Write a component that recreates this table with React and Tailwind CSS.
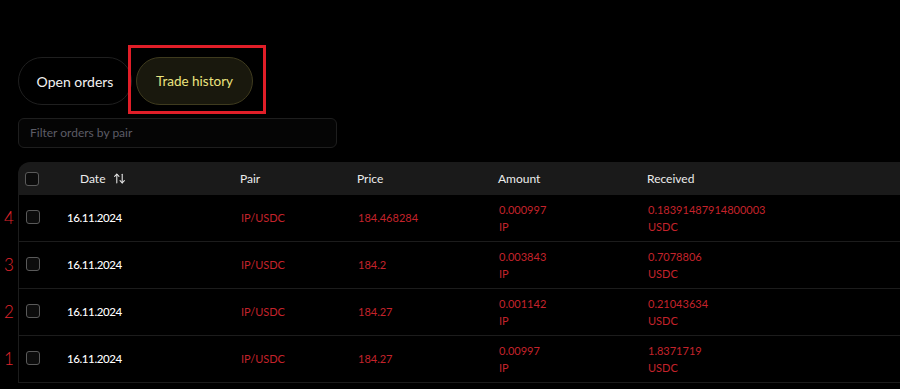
import React from 'react';
import { ArrowUpDown } from 'lucide-react';

const rows = [
  { n: '4', date: '16.11.2024', pair: 'IP/USDC', price: '184.468284', amount: '0.000997', received: '0.18391487914800003' },
  { n: '3', date: '16.11.2024', pair: 'IP/USDC', price: '184.2', amount: '0.003843', received: '0.7078806' },
  { n: '2', date: '16.11.2024', pair: 'IP/USDC', price: '184.27', amount: '0.001142', received: '0.21043634' },
  { n: '1', date: '16.11.2024', pair: 'IP/USDC', price: '184.27', amount: '0.00997', received: '1.8371719' },
];

const cols = 'grid grid-cols-[48px_174px_117px_141px_149px_1fr] items-center';

function Box() {
  return <div className="w-[14px] h-[14px] rounded-[3px] border border-[#5a5a5a] bg-[#0c0c0c]" />;
}

export default function App() {
  return (
    <div className="w-[900px] h-[389px] overflow-hidden bg-black text-white" style={{ fontFamily: 'Lato, "Noto Sans", sans-serif' }}>
      <div className="pt-[57px] pl-[18px]">
        {/* tabs */}
        <div className="flex items-center gap-[4px]">
          <button className="h-[48px] w-[114px] rounded-full border border-[#1f1f1f] text-[14px] text-[#f2f2f2]">
            Open orders
          </button>
          <div className="relative">
            <button className="h-[48px] w-[117px] rounded-full border border-[#3f3b1e] bg-[#19180d] text-[13.5px] text-[#ece47f]">
              Trade history
            </button>
            <div className="absolute left-[-8px] top-[-12px] w-[138px] h-[69px] border-[3px] border-[#e01e28] pointer-events-none" />
          </div>
        </div>

        {/* filter */}
        <div className="mt-[13px] w-[319px] h-[30px] rounded-md border border-[#1e1e1e] bg-[#050505] flex items-center px-[11px]">
          <span className="text-[12px] text-[#5c5c66]">Filter orders by pair</span>
        </div>

        {/* table */}
        <div className="mt-[14px] relative">
          <div className={`${cols} h-[33px] bg-[#1a1a1a] rounded-tl-[12px] text-[12px] text-[#ececec]`}>
            <div className="pl-[7px]"><Box /></div>
            <div className="pl-[14px] flex items-center gap-[8px]">
              Date <ArrowUpDown size={13} strokeWidth={2} className="text-[#e5e5e5]" />
            </div>
            <div>Pair</div>
            <div>Price</div>
            <div>Amount</div>
            <div>Received</div>
          </div>
          {rows.map((r) => (
            <div key={r.n} className={`${cols} relative h-[47px] border-b border-l border-[#1c1c1c] text-[11px]`}>
              <span className="absolute left-[-15px] top-[14px] text-[17px] leading-none text-[#e0252d] font-light">{r.n}</span>
              <div className="pl-[7px] -mt-[3px]"><Box /></div>
              <div className="text-white font-medium text-[11.5px] tracking-[-0.4px]">{r.date}</div>
              <div className="text-[#c4232b]">{r.pair}</div>
              <div className="text-[#c4232b]">{r.price}</div>
              <div className="text-[#c4232b] leading-[17px]">
                <div>{r.amount}</div>
                <div>IP</div>
              </div>
              <div className="text-[#c4232b] leading-[17px]">
                <div>{r.received}</div>
                <div>USDC</div>
              </div>
            </div>
          ))}
        </div>
      </div>
    </div>
  );
}
